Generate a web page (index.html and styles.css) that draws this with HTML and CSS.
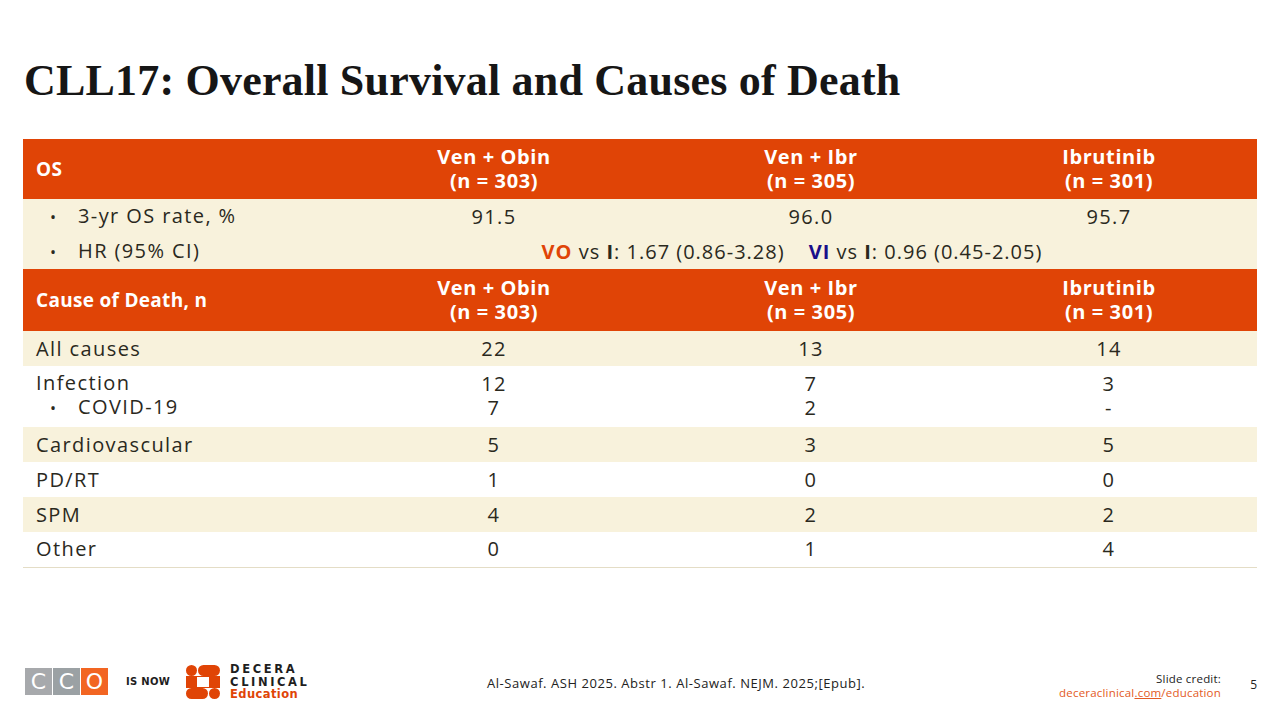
FILE: index.html
```html
<!DOCTYPE html>
<html lang="en">
<head>
<meta charset="utf-8">
<title>CLL17: Overall Survival and Causes of Death</title>
<link rel="stylesheet" href="styles.css">
</head>
<body>
<div class="slide">
  <h1 class="title">CLL17: Overall Survival and Causes of Death</h1>

  <table class="data">
    <colgroup>
      <col class="c0"><col class="c1"><col class="c2"><col class="c3">
    </colgroup>
    <tr class="head">
      <th class="lbl">OS</th>
      <th><span class="hl">Ven + Obin</span><span class="hl">(n = 303)</span></th>
      <th><span class="hl">Ven + Ibr</span><span class="hl">(n = 305)</span></th>
      <th><span class="hl">Ibrutinib</span><span class="hl">(n = 301)</span></th>
    </tr>
    <tr class="cream">
      <td class="lbl bul"><span class="dot">•</span>3-yr OS rate, %</td>
      <td>91.5</td>
      <td>96.0</td>
      <td>95.7</td>
    </tr>
    <tr class="cream">
      <td class="lbl bul"><span class="dot">•</span>HR (95% CI)</td>
      <td colspan="3" class="hr"><b class="vo">VO</b> vs <b>I</b>: 1.67 (0.86-3.28)<span class="sp"></span><b class="vi">VI</b> vs <b>I</b>: 0.96 (0.45-2.05)</td>
    </tr>
    <tr class="head head2">
      <th class="lbl">Cause of Death, n</th>
      <th><span class="hl">Ven + Obin</span><span class="hl">(n = 303)</span></th>
      <th><span class="hl">Ven + Ibr</span><span class="hl">(n = 305)</span></th>
      <th><span class="hl">Ibrutinib</span><span class="hl">(n = 301)</span></th>
    </tr>
    <tr class="cream">
      <td class="lbl">All causes</td><td>22</td><td>13</td><td>14</td>
    </tr>
    <tr class="white tall">
      <td class="lbl"><span class="hl">Infection</span><span class="hl sub"><span class="dot">•</span>COVID-19</span></td>
      <td><span class="hl">12</span><span class="hl">7</span></td>
      <td><span class="hl">7</span><span class="hl">2</span></td>
      <td><span class="hl">3</span><span class="hl">-</span></td>
    </tr>
    <tr class="cream">
      <td class="lbl">Cardiovascular</td><td>5</td><td>3</td><td>5</td>
    </tr>
    <tr class="white">
      <td class="lbl">PD/RT</td><td>1</td><td>0</td><td>0</td>
    </tr>
    <tr class="cream">
      <td class="lbl">SPM</td><td>4</td><td>2</td><td>2</td>
    </tr>
    <tr class="white last">
      <td class="lbl">Other</td><td>0</td><td>1</td><td>4</td>
    </tr>
  </table>

  <footer class="foot">
    <div class="brand">
      <div class="cco">
        <span class="box g1">C</span><span class="box g2">C</span><span class="box or">O</span>
      </div>
      <span class="isnow">IS NOW</span>
      <svg class="decera-icon" viewBox="0 0 34 34" width="34" height="34" aria-hidden="true">
        <circle cx="5.5" cy="5.5" r="5.5" fill="#E04406"/>
        <rect x="12" y="0" width="22" height="11" rx="5.5" fill="#E04406"/>
        <rect x="0" y="12" width="11" height="10" fill="#E04406"/>
        <rect x="23" y="12" width="11" height="10" fill="#E04406"/>
        <rect x="0" y="23" width="22" height="11" rx="5.5" fill="#E04406"/>
        <circle cx="28.5" cy="28.5" r="5.5" fill="#E04406"/>
        <rect x="0" y="11" width="34" height="1" fill="#E04406"/>
        <rect x="0" y="22" width="34" height="1" fill="#E04406"/>
      </svg>
      <div class="decera-text">
        <span class="dk">DECERA</span>
        <span class="dk">CLINICAL</span>
        <span class="edu">Education</span>
      </div>
    </div>
    <div class="cite">Al-Sawaf. ASH 2025. Abstr 1. Al-Sawaf. NEJM. 2025;[Epub].</div>
    <div class="credit">
      <span class="cr-lbl">Slide credit:</span>
      <span class="cr-link">deceraclinical<u>.com</u>/education</span>
    </div>
    <div class="page">5</div>
  </footer>
</div>
</body>
</html>
```

FILE: styles.css
```css
* { box-sizing: border-box; }
html, body { margin: 0; padding: 0; background: #fff; }
body { font-family: "Open Sans", "Noto Sans", sans-serif; color: #2a291d; }

.slide {
  width: 1280px;
  height: 720px;
  display: flex;
  flex-direction: column;
  padding: 0 23px 0 23px;
  overflow: hidden;
}

.title {
  font-family: "Liberation Serif", "DejaVu Serif", serif;
  font-weight: 700;
  font-size: 44px;
  line-height: 48px;
  color: #161616;
  margin: 57px 0 0 1px;
  letter-spacing: 0.2px;
}

.data {
  margin-top: 34px;
  width: 1234px;
  border-collapse: collapse;
  table-layout: fixed;
  font-size: 20px;
}
.c0 { width: 312px; }
.c1 { width: 318px; }
.c2 { width: 316px; }
.c3 { width: 288px; }

.data th, .data td {
  padding: 0;
  text-align: center;
  vertical-align: middle;
}
.data tr > :last-child { padding-right: 8px; }
.data .lbl { text-align: left; padding-left: 13px; }

.hl { display: block; }

.head { background: #E04406; color: #fff; height: 60px; }
.head2 { height: 62px; }
.head th { font-weight: 700; font-size: 20px; line-height: 24px; letter-spacing: 0.6px; }
.head th.lbl { font-size: 19px; letter-spacing: 0.3px; }

.cream { background: #F8F2DC; height: 35px; }
.white { background: #fff; height: 35px; }
.tall { height: 61px; }
.tall td { line-height: 25px; padding-bottom: 2px; }
.tall .sub { padding-left: 14px; }
.last td { border-bottom: 1px solid #E4DDC6; }

.data td { line-height: 24px; font-weight: 400; letter-spacing: 1.4px; }

.bul { padding-left: 27px !important; }
.dot { display: inline-block; width: 28px; font-size: 16px; letter-spacing: 0; }

.hr { text-align: center; letter-spacing: 1px !important; }
.hr .sp { display: inline-block; width: 24px; }
.vo { color: #E04406; }
.vi { color: #1A0F8A; }

.foot {
  margin-top: auto;
  height: 64px;
  display: flex;
  align-items: flex-start;
  position: relative;
}

.brand {
  display: flex;
  align-items: center;
  margin-top: 7px;
  margin-left: 2px;
}
.cco { display: flex; gap: 1px; }
.box {
  width: 27px; height: 27px;
  display: flex; align-items: center; justify-content: center;
  color: #fff;
  font-family: "DejaVu Sans", sans-serif;
  font-size: 22px; font-weight: 400;
  line-height: 1;
}
.g1 { background: #A7A9AC; }
.g2 { background: #9BA1A4; }
.or { background: #F26522; }
.isnow {
  margin-left: 18px;
  font-family: "DejaVu Sans", sans-serif;
  font-weight: 700;
  font-size: 10px;
  letter-spacing: 0.3px;
  color: #1e1e1e;
}
.decera-icon { margin-left: 16px; display: block; }
.decera-text {
  margin-left: 10px;
  display: flex; flex-direction: column;
  font-family: "DejaVu Sans", sans-serif;
  font-weight: 700;
  font-size: 11.5px;
  line-height: 12.5px;
}
.decera-text .dk { color: #1e1e1e; letter-spacing: 2.6px; }
.decera-text .edu { color: #E04406; letter-spacing: 0.4px; }

.cite {
  position: absolute;
  left: 464px;
  top: 18px;
  font-size: 13px;
  letter-spacing: 0.55px;
  color: #222;
}

.credit {
  position: absolute;
  right: 36px;
  top: 16px;
  display: flex; flex-direction: column; align-items: flex-end;
  font-size: 11.5px;
  line-height: 13.5px;
  letter-spacing: 0.2px;
}
.cr-lbl { color: #222; }
.cr-link { color: #E35A24; }
.cr-link u { text-decoration: underline; }

.page {
  position: absolute;
  right: 0;
  top: 20px;
  font-size: 12px;
  color: #222;
}
```
